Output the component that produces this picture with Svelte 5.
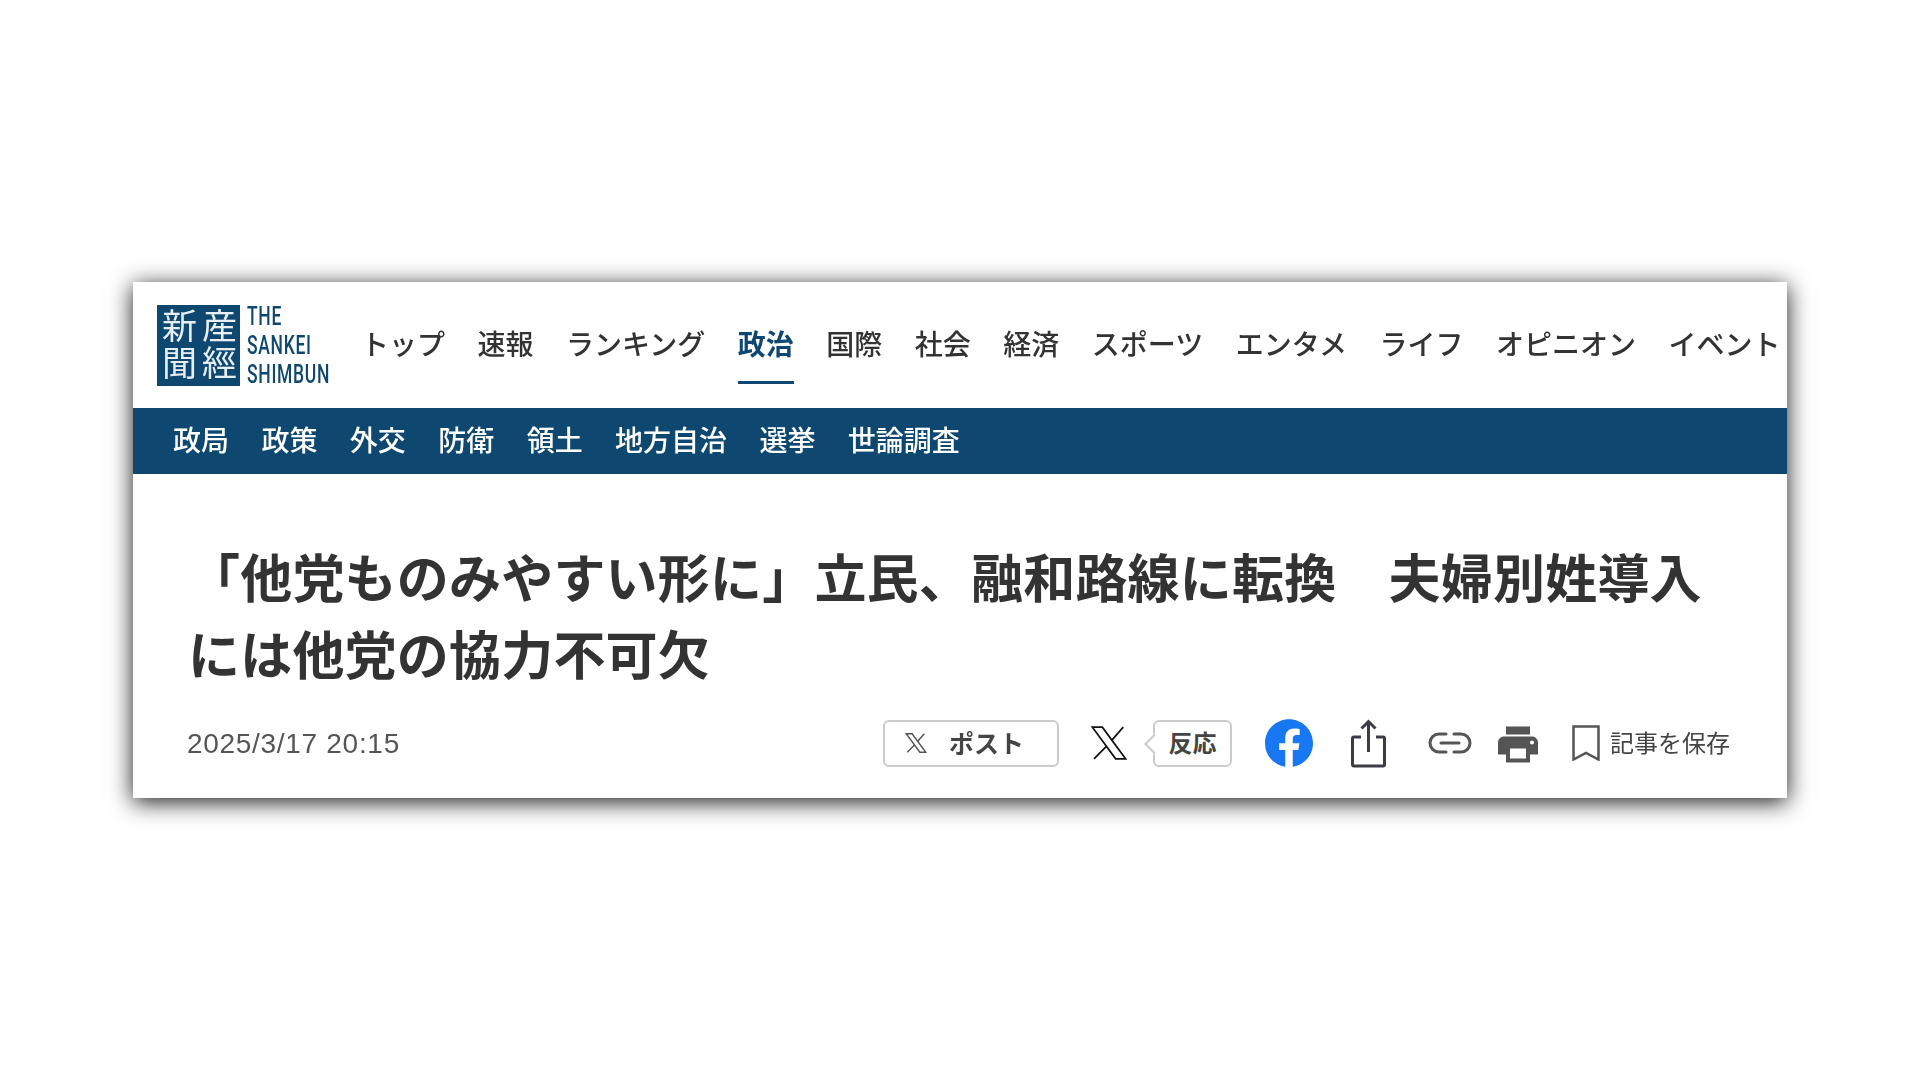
<script>
  const mainNav = ["トップ", "速報", "ランキング", "政治", "国際", "社会", "経済", "スポーツ", "エンタメ", "ライフ", "オピニオン", "イベント"];
  const subNav = ["政局", "政策", "外交", "防衛", "領土", "地方自治", "選挙", "世論調査"];
  const xBand = "M1.500 2h6.300l14.700 20h-6.300zM21 2l-7.600 8.700M10.500 14l-8 8";
</script>

<div class="page">
  <article class="card">
    <header class="head">
      <div class="logo">
        <div class="seal">産經<br />新聞</div>
        <div class="wordmark-box">
          <div class="wordmark">THE<br />SANKEI<br />SHIMBUN</div>
        </div>
      </div>
      <nav class="main-nav">
        {#each mainNav as item}
          <span class="main-item" class:active={item === "政治"}>{item}</span>
        {/each}
      </nav>
    </header>

    <nav class="sub-nav">
      {#each subNav as item}
        <span>{item}</span>
      {/each}
    </nav>

    <div class="body">
      <h1>「他党ものみやすい形に」立民、融和路線に転換　夫婦別姓導入には他党の協力不可欠</h1>
      <div class="meta">
        <time>2025/3/17 20:15</time>
        <div class="actions">
          <div class="post">
            <svg class="post-x" viewBox="0 0 24 24"><path d={xBand} /></svg>
            <span>ポスト</span>
          </div>
          <svg class="x-icon" viewBox="0 0 24 24"><path d={xBand} /></svg>
          <div class="bubble">反応</div>
          <svg class="fb" viewBox="0 0 24 24"><path d="M24 12.073c0-6.627-5.373-12-12-12s-12 5.373-12 12c0 5.99 4.388 10.954 10.125 11.854v-8.385H7.078v-3.47h3.047V9.43c0-3.007 1.792-4.669 4.533-4.669 1.312 0 2.686.235 2.686.235v2.953H15.83c-1.491 0-1.956.925-1.956 1.874v2.25h3.328l-.532 3.47h-2.796v8.385C19.612 23.027 24 18.062 24 12.073z" /></svg>
          <svg class="share" viewBox="0 0 35 49"><path d="M10 18H3a1.500 1.500 0 0 0-1.500 1.500v26A1.500 1.500 0 0 0 3 47h29a1.500 1.500 0 0 0 1.500-1.500v-26A1.500 1.500 0 0 0 32 18h-7" /><path d="M17.500 33V3M10.500 9.500l7-7 7 7" /></svg>
          <svg class="link" viewBox="0 0 44 22"><path d="M18 2h-7a9 9 0 0 0 0 18h7M26 2h7a9 9 0 0 1 0 18h-7M13 11h18" /></svg>
          <svg class="print" viewBox="2 3 20 18"><path d="M19 8H5c-1.660 0-3 1.340-3 3v6h4v4h12v-4h4v-6c0-1.660-1.340-3-3-3zm-3 11H8v-5h8v5zm3-7c-.550 0-1-.450-1-1s.450-1 1-1 1 .450 1 1-.450 1-1 1zm-1-9H6v4h12V3z" /></svg>
          <svg class="bookmark" viewBox="0 0 28 36"><path d="M1.500 1.500h25v33L14 28 1.500 34.500z" /></svg>
          <span class="save">記事を保存</span>
        </div>
      </div>
    </div>
  </article>
</div>

<style>
  :global(body) {
    background: #fff;
  }

  .page {
    padding: 282px 0 0 133px;
    height: 798px;
    font-family: "Noto Sans CJK JP", "Liberation Sans", sans-serif;
    color: #333;
  }

  .card {
    width: 1654px;
    background: #fff;
    box-shadow: 0 4px 22px rgba(0, 0, 0, 0.9);
    filter: blur(0.4px);
  }

  .head {
    height: 126px;
    display: flex;
    align-items: stretch;
    padding-left: 24px;
  }

  .logo {
    display: flex;
    align-items: center;
    gap: 7px;
    width: 174px;
    margin-right: 30px;
  }

  .seal {
    width: 83px;
    height: 81px;
    background: #0e4870;
    color: #e8eff4;
    writing-mode: vertical-rl;
    box-sizing: border-box;
    padding: 3px 1px 0 0;
    font-size: 35px;
    line-height: 40px;
    letter-spacing: 2px;
    font-weight: 400;
    flex: none;
  }

  .wordmark-box {
    width: 84px;
  }

  .wordmark {
    font-family: Roboto, "Liberation Sans", sans-serif;
    font-size: 25px;
    font-weight: 500;
    line-height: 29px;
    color: #0e4870;
    white-space: nowrap;
    letter-spacing: 1px;
    transform: scaleX(0.7);
    transform-origin: left center;
  }

  .main-nav {
    display: flex;
    gap: 32.5px;
    white-space: nowrap;
  }

  .main-item {
    font-size: 28px;
    font-weight: 500;
    line-height: 122px;
    height: 100px;
    position: relative;
  }

  .main-item.active {
    color: #0e4870;
    font-weight: 700;
  }

  .main-item.active::after {
    content: "";
    position: absolute;
    left: 0;
    right: 0;
    top: 99px;
    height: 3px;
    background: #0e4870;
  }

  .sub-nav {
    height: 66px;
    box-sizing: border-box;
    padding: 0 0 4px 40px;
    background: #0e4870;
    color: #fff;
    display: flex;
    align-items: center;
    gap: 32.4px;
    font-size: 28px;
    font-weight: 500;
  }

  .body {
    padding: 63px 57px 31px 55px;
  }

  h1 {
    margin: 0;
    font-size: 52px;
    line-height: 77px;
    font-weight: 700;
    letter-spacing: 0.2px;
    color: #333;
  }

  .meta {
    margin-top: 28px;
    height: 48px;
    display: flex;
    align-items: center;
    justify-content: space-between;
    margin-left: -1px;
  }

  time {
    font-family: "Liberation Sans", sans-serif;
    font-size: 28px;
    letter-spacing: 0.7px;
    padding-top: 2px;
    color: #555;
  }

  .actions {
    display: flex;
    align-items: center;
  }

  .post {
    width: 176px;
    height: 47px;
    box-sizing: border-box;
    border: 2px solid #ccc;
    border-radius: 6px;
    display: flex;
    align-items: center;
    padding-left: 20px;
    gap: 22px;
    font-size: 25px;
    font-weight: 700;
    color: #444;
  }

  .post span {
    padding-bottom: 3px;
  }

  .post-x {
    width: 22px;
    height: 22px;
    fill: none;
    stroke: #555;
    stroke-width: 1.6;
  }

  .x-icon {
    width: 38px;
    height: 38px;
    margin-left: 31px;
    fill: none;
    stroke: #111;
    stroke-width: 1.1;
  }

  .bubble {
    position: relative;
    margin-left: 25px;
    width: 79px;
    height: 47px;
    box-sizing: border-box;
    padding-bottom: 3px;
    border: 2px solid #ccc;
    border-radius: 6px;
    display: flex;
    align-items: center;
    justify-content: center;
    font-size: 24px;
    font-weight: 700;
    color: #444;
    background: #fff;
  }

  .bubble::before {
    content: "";
    position: absolute;
    left: -8px;
    top: 15px;
    width: 12px;
    height: 12px;
    background: #fff;
    border-left: 2px solid #ccc;
    border-bottom: 2px solid #ccc;
    transform: rotate(45deg);
  }

  .fb {
    width: 48px;
    height: 48px;
    margin-left: 33px;
    fill: #1877f2;
  }

  .share {
    width: 35px;
    height: 49px;
    margin-left: 38px;
    fill: none;
    stroke: #3c3c46;
    stroke-width: 3;
  }

  .link {
    width: 44px;
    height: 22px;
    margin-left: 42px;
    fill: none;
    stroke: #555;
    stroke-width: 3;
    stroke-linecap: round;
  }

  .print {
    width: 40px;
    height: 37px;
    margin-left: 26px;
    margin-top: 3px;
    fill: #555;
  }

  .bookmark {
    width: 28px;
    height: 36px;
    margin-left: 34px;
    fill: none;
    stroke: #555;
    stroke-width: 2.5;
  }

  .save {
    margin-left: 10px;
    padding-bottom: 3px;
    font-size: 24px;
    color: #444;
    white-space: nowrap;
  }
</style>
